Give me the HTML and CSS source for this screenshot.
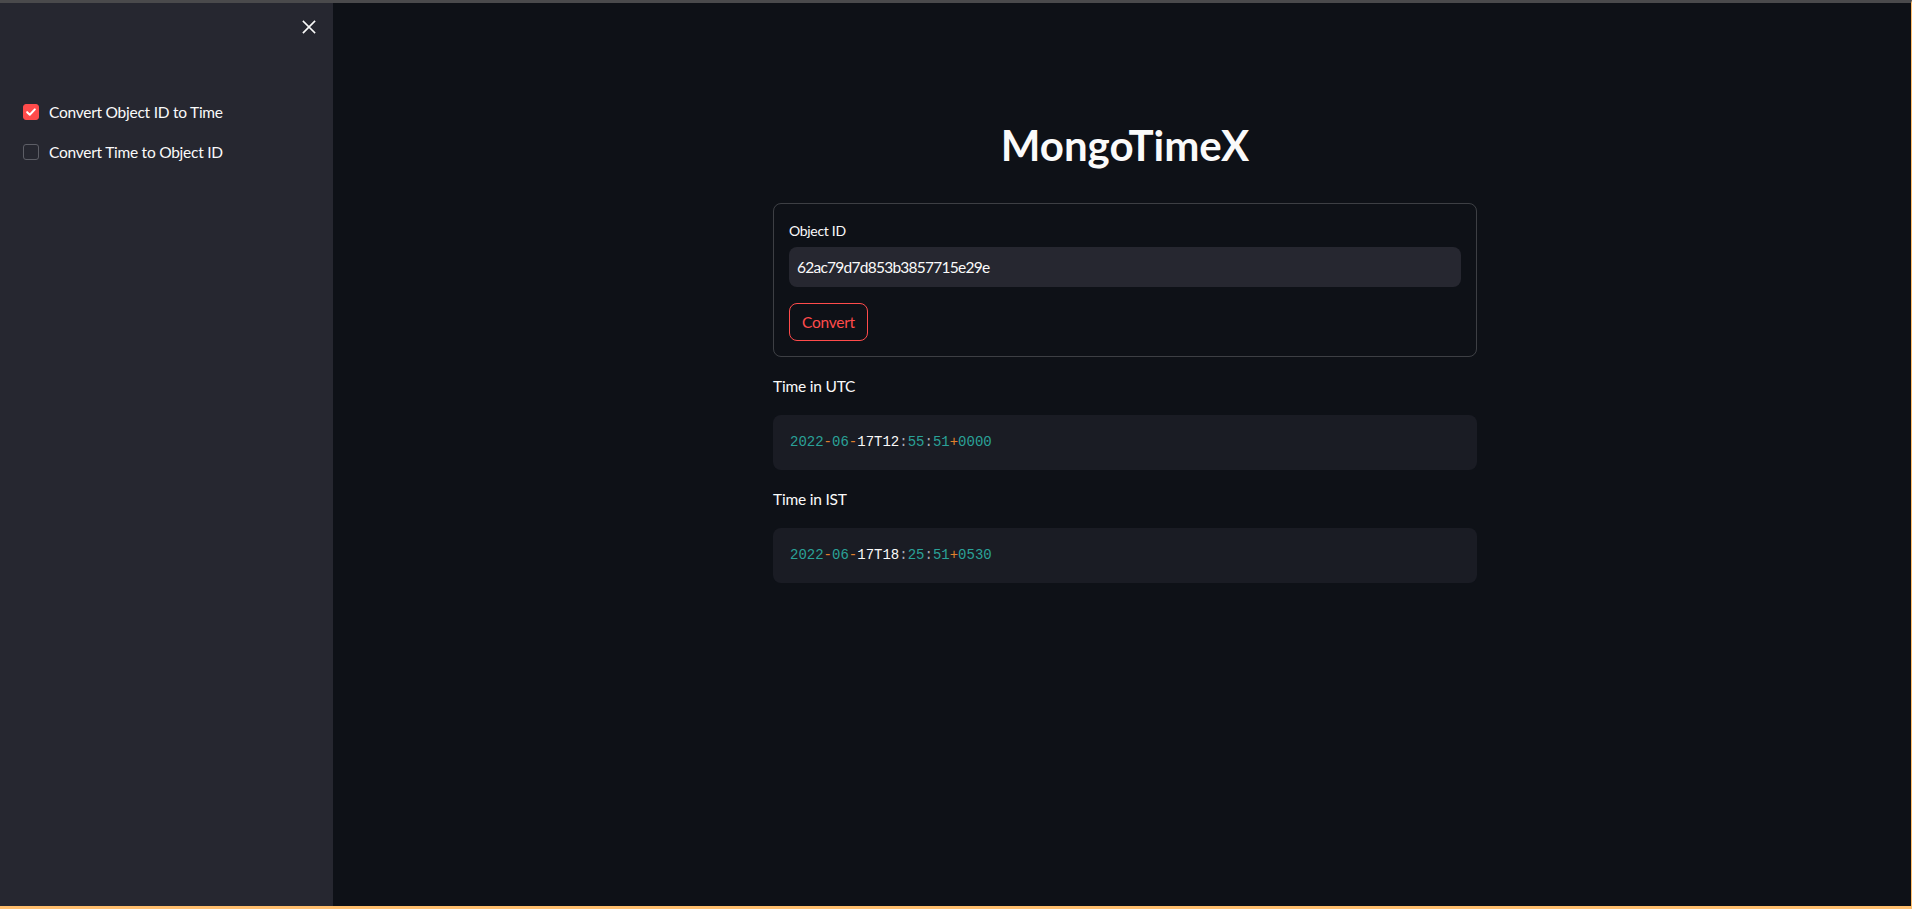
FILE: index.html
```html
<!DOCTYPE html>
<html lang="en">
<head>
<meta charset="utf-8">
<title>MongoTimeX</title>
<link rel="stylesheet" href="styles.css">
</head>
<body>
<div class="app">
  <aside class="sidebar">
    <div class="sb-head">
      <button class="close" type="button" aria-label="Close sidebar">
        <svg width="14" height="14" viewBox="0 0 14 14"><path d="M1.5 1.5 L12.5 12.5 M12.5 1.5 L1.5 12.5" stroke="#fafafa" stroke-width="1.7" stroke-linecap="square" fill="none"/></svg>
      </button>
    </div>
    <div class="sb-body">
      <label class="cb">
        <span class="box checked"><svg width="16" height="16" viewBox="0 0 16 16"><path d="M3.6 8.2 L6.6 11.2 L12.4 5" stroke="#fff" stroke-width="2.3" fill="none" stroke-linecap="round" stroke-linejoin="round"/></svg></span>
        <span class="cb-text">Convert Object ID to Time</span>
      </label>
      <label class="cb">
        <span class="box"></span>
        <span class="cb-text">Convert Time to Object ID</span>
      </label>
    </div>
  </aside>
  <main class="main">
    <div class="block">
      <h1 class="title">MongoTimeX</h1>
      <form class="form">
        <div class="field-label">Object ID</div>
        <div class="input">62ac79d7d853b3857715e29e</div>
        <button class="btn" type="button">Convert</button>
      </form>
      <p class="text">Time in UTC</p>
      <pre class="code"><span class="n">2022</span><span class="o">-</span><span class="n">06</span><span class="o">-</span><span class="w">17T12</span><span class="p">:</span><span class="n">55</span><span class="p">:</span><span class="n">51</span><span class="o">+</span><span class="n">0000</span></pre>
      <p class="text">Time in IST</p>
      <pre class="code"><span class="n">2022</span><span class="o">-</span><span class="n">06</span><span class="o">-</span><span class="w">17T18</span><span class="p">:</span><span class="n">25</span><span class="p">:</span><span class="n">51</span><span class="o">+</span><span class="n">0530</span></pre>
    </div>
  </main>
</div>
</body>
</html>
```
FILE: styles.css
```css
* { box-sizing: border-box; }
html, body { margin: 0; padding: 0; }
body {
  background: #0e1117;
  font-family: Lato, "Noto Sans", sans-serif;
  color: #fafafa;
}
.app {
  display: flex;
  height: 909px;
  border-top: 3px solid #4a4a4c;
  border-bottom: 3px solid #ffbf6e;
  border-right: 1px solid #ffbf6e;
  overflow: hidden;
}
.sidebar {
  width: 333px;
  flex: 0 0 333px;
  background: #262730;
  display: flex;
  flex-direction: column;
}
.sb-head {
  display: flex;
  justify-content: flex-end;
  padding: 12px 12px 0 0;
}
.close {
  width: 24px;
  height: 24px;
  border: 0;
  padding: 0;
  background: transparent;
  display: flex;
  align-items: center;
  justify-content: center;
}
.sb-body {
  display: flex;
  flex-direction: column;
  gap: 16px;
  padding: 61px 0 0 23px;
}
.cb {
  display: flex;
  align-items: center;
  gap: 10px;
  height: 24px;
  font-size: 15.5px;
  letter-spacing: -0.25px;
  color: #fafafa;
}
.box {
  width: 16px;
  height: 16px;
  border-radius: 3px;
  border: 1px solid #5d5e66;
  display: flex;
  align-items: center;
  justify-content: center;
}
.box.checked {
  background: #ff4b4b;
  border-color: #ff4b4b;
}
.box svg { display: block; }
.main {
  flex: 1;
  display: flex;
  justify-content: center;
  padding-left: 6px;
}
.block {
  width: 704px;
  padding-top: 117px;
}
.title {
  margin: 0 0 33px;
  font-size: 42px;
  line-height: 1.2;
  font-weight: 700;
  text-align: center;
  color: #fafafa;
}
.form {
  margin: 0;
  border: 1px solid rgba(250, 250, 250, 0.2);
  border-radius: 8px;
  padding: 15px;
}
.field-label {
  font-size: 14px;
  letter-spacing: -0.3px;
  line-height: 21px;
  padding-top: 1px;
  margin-bottom: 6px;
  color: #fafafa;
}
.input {
  height: 40px;
  background: #262730;
  border-radius: 8px;
  padding: 0 8px;
  font-size: 15.5px;
  letter-spacing: -0.75px;
  line-height: 40px;
  color: #fafafa;
}
.btn {
  margin-top: 16px;
  height: 38px;
  padding: 0 12px;
  background: transparent;
  border: 1px solid #ff4b4b;
  border-radius: 8px;
  color: #ff4b4b;
  font-family: inherit;
  font-size: 15.5px;
  letter-spacing: -0.25px;
}
.text {
  margin: 16px 0 16px;
  font-size: 15.5px;
  letter-spacing: -0.2px;
  line-height: 26px;
}
.code {
  margin: 0;
  height: 55px;
  background: #1a1c24;
  border-radius: 8px;
  padding: 16px 17px;
  font-family: "Liberation Mono", "DejaVu Sans Mono", monospace;
  font-size: 14px;
  line-height: 23px;
  color: #fafafa;
}
.code .n { color: #2aa198; }
.code .o { color: #e0812e; }
.code .p { color: #a9abb3; }
.code .w { color: #fafafa; }
```
